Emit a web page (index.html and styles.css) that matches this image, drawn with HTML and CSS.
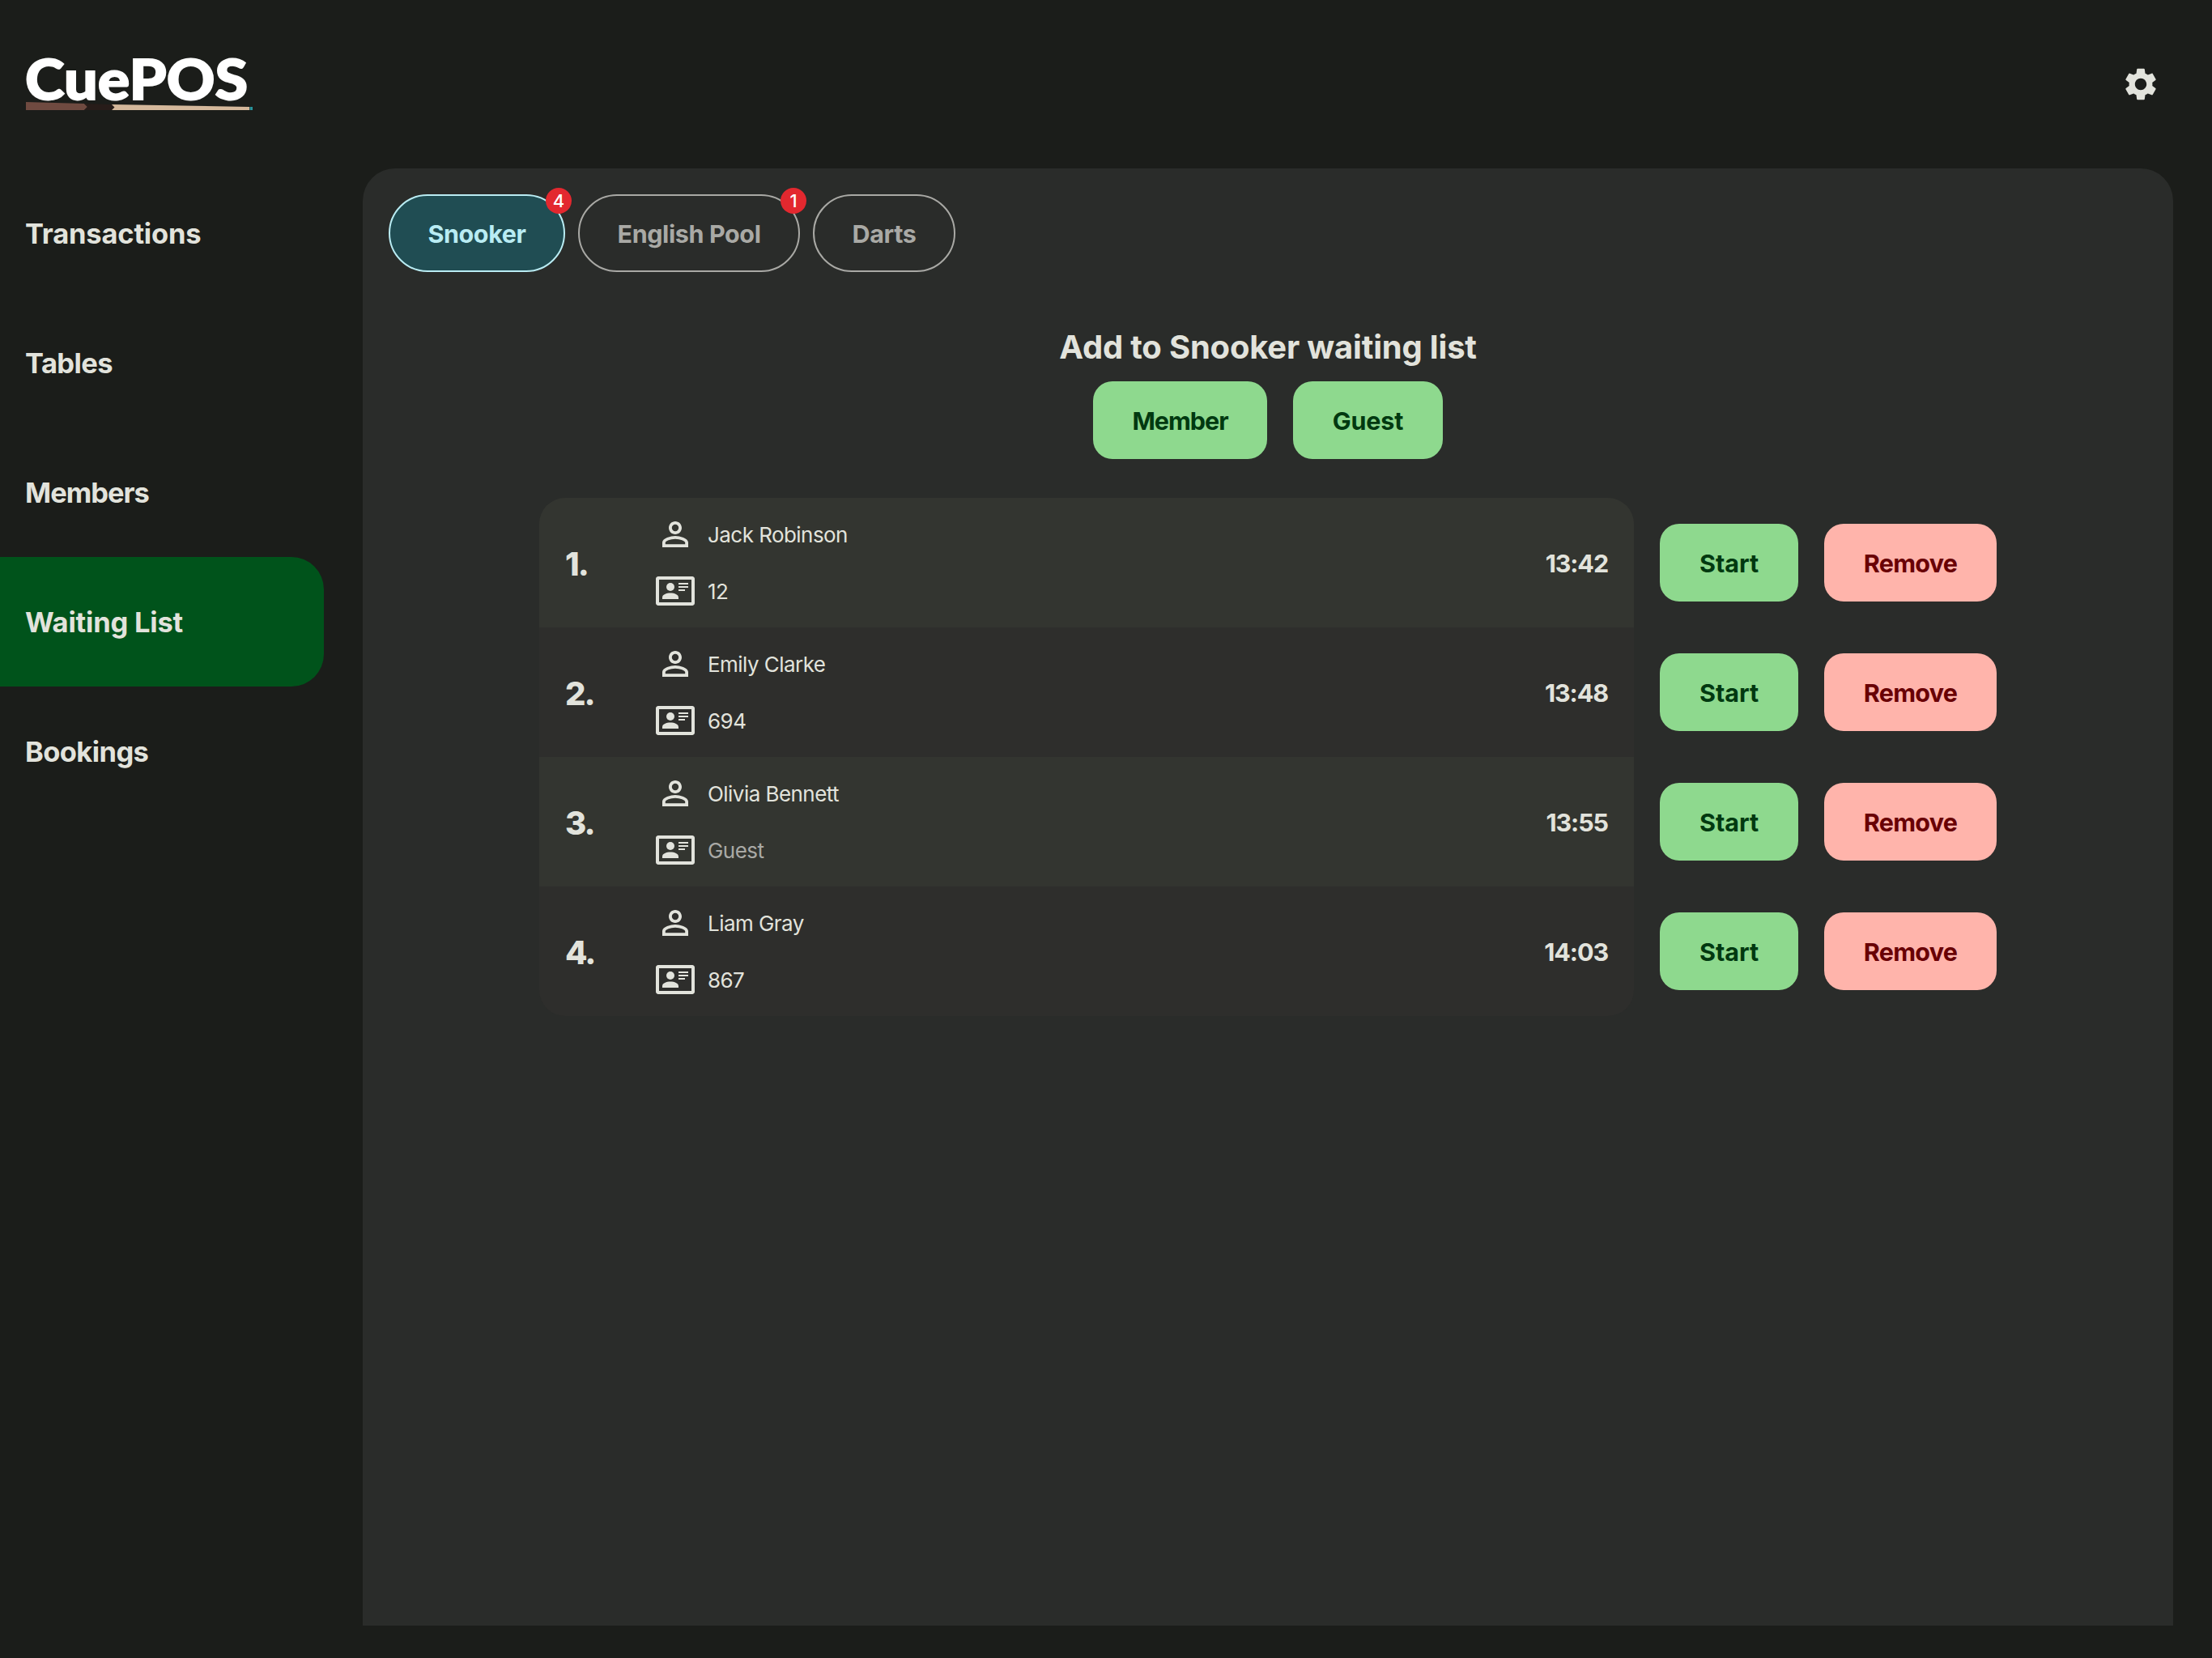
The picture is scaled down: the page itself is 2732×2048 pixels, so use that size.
FILE: index.html
```html
<!DOCTYPE html>
<html lang="en">
<head>
<meta charset="utf-8">
<title>CuePOS</title>
<link rel="stylesheet" href="styles.css">
</head>
<body>
<svg class="sprite" width="0" height="0" aria-hidden="true">
  <symbol id="person" viewBox="0 0 24 24"><path d="M12 5.9a2.1 2.1 0 1 1 0 4.2 2.1 2.1 0 0 1 0-4.2m0 9c2.97 0 6.1 1.46 6.1 2.1v1.1H5.9V17c0-.64 3.13-2.1 6.1-2.1M12 4C9.79 4 8 5.79 8 8s1.79 4 4 4 4-1.79 4-4-1.79-4-4-4zm0 9c-2.67 0-8 1.34-8 4v3h16v-3c0-2.66-5.33-4-8-4z"/></symbol>
  <symbol id="card" viewBox="0 0 24 24"><path fill-rule="evenodd" d="M1.500 3h21c.83 0 1.500.67 1.500 1.500v15c0 .83-.67 1.500-1.500 1.500h-21C.67 21 0 20.330 0 19.500v-15C0 3.670.67 3 1.500 3zM2 5v14h20V5z"/><circle cx="9" cy="9.500" r="2.500"/><path d="M4 17v-1c0-1.700 2.500-2.700 5-2.700s5 1 5 2.700v1zM14 7h6v1h-6zM14 9h6v1h-6zM14 11h4v1h-4z"/></symbol>
</svg>
<div class="app">
  <header class="topbar">
    <svg class="logo" width="284" height="80" viewBox="0 0 284 80" role="img" aria-label="CuePOS">
      <text class="logo-text" x="-1" y="58.500" textLength="275" lengthAdjust="spacingAndGlyphs">CuePOS</text>
      <path fill="#6f4a40" d="M0 62l72 2 4 4-4 4H0z"/>
      <path fill="#271c19" d="M72 64l34 1 4 3.500-4 3.500H72l4-4z"/>
      <path fill="#d4b89b" d="M106 65l170 3v4H106l3.500-3.500z"/>
      <path fill="#2a939a" d="M276.500 68h3.500v4h-3.500z"/>
    </svg>
    <svg class="gear" viewBox="0 0 24 24" aria-label="Settings"><path d="M19.140 12.940c.04-.3.060-.61.060-.94 0-.32-.02-.64-.07-.94l2.030-1.580c.18-.14.230-.41.120-.61l-1.920-3.320c-.12-.22-.37-.29-.59-.22l-2.390.96c-.5-.38-1.030-.7-1.620-.94L14.400 2.810c-.04-.24-.24-.41-.48-.41h-3.840c-.24 0-.43.17-.47.41L9.250 5.350c-.59.24-1.130.57-1.620.94l-2.390-.96c-.22-.08-.47 0-.59.22L2.740 8.870c-.12.21-.08.47.12.61l2.030 1.580c-.05.3-.09.63-.09.94s.02.64.07.94l-2.030 1.580c-.18.14-.23.41-.12.61l1.920 3.320c.12.22.37.29.59.22l2.390-.96c.5.38 1.030.7 1.620.94l.36 2.540c.05.24.24.41.48.41h3.840c.24 0 .44-.17.47-.41l.36-2.540c.59-.24 1.130-.56 1.620-.94l2.390.96c.22.08.47 0 .59-.22l1.920-3.320c.12-.22.070-.47-.12-.61zM12 15.600c-1.980 0-3.600-1.620-3.600-3.600s1.620-3.600 3.600-3.600 3.600 1.620 3.600 3.600-1.620 3.600-3.600 3.600z"/></svg>
  </header>
  <nav class="nav">
    <a class="nav-item wide">Transactions</a>
    <a class="nav-item">Tables</a>
    <a class="nav-item tight">Members</a>
    <a class="nav-item wide active">Waiting List</a>
    <a class="nav-item">Bookings</a>
  </nav>
  <main class="panel">
    <div class="tabs">
      <button class="tab tab-snooker selected">Snooker<span class="count">4</span></button>
      <button class="tab tab-pool">English Pool<span class="count">1</span></button>
      <button class="tab tab-darts">Darts</button>
    </div>
    <h1 class="title">Add to Snooker waiting list</h1>
    <div class="add">
      <button class="btn go member">Member</button>
      <button class="btn go guest">Guest</button>
    </div>
    <ol class="list">
      <li class="row">
        <div class="entry"><span class="pos">1.</span>
          <div class="who"><div class="line"><svg class="icon"><use href="#person"/></svg>Jack Robinson</div><div class="line"><svg class="icon"><use href="#card"/></svg>12</div></div>
          <time class="time">13:42</time></div>
        <button class="btn go start">Start</button><button class="btn stop">Remove</button>
      </li>
      <li class="row">
        <div class="entry"><span class="pos">2.</span>
          <div class="who"><div class="line"><svg class="icon"><use href="#person"/></svg>Emily Clarke</div><div class="line"><svg class="icon"><use href="#card"/></svg>694</div></div>
          <time class="time">13:48</time></div>
        <button class="btn go start">Start</button><button class="btn stop">Remove</button>
      </li>
      <li class="row">
        <div class="entry"><span class="pos">3.</span>
          <div class="who"><div class="line"><svg class="icon"><use href="#person"/></svg>Olivia Bennett</div><div class="line"><svg class="icon"><use href="#card"/></svg><span class="muted">Guest</span></div></div>
          <time class="time">13:55</time></div>
        <button class="btn go start">Start</button><button class="btn stop">Remove</button>
      </li>
      <li class="row">
        <div class="entry"><span class="pos">4.</span>
          <div class="who"><div class="line"><svg class="icon"><use href="#person"/></svg>Liam Gray</div><div class="line"><svg class="icon"><use href="#card"/></svg>867</div></div>
          <time class="time">14:03</time></div>
        <button class="btn go start">Start</button><button class="btn stop">Remove</button>
      </li>
    </ol>
  </main>
</div>
</body>
</html>
```
FILE: styles.css
```css
* { box-sizing: border-box; }
body { margin: 0; background: #1b1d1a; color: #e2e3dc; font-family: Inter, sans-serif; }
button { font-family: inherit; margin: 0; }
.sprite { display: block; }
.app {
  width: 2732px; height: 2048px;
  display: grid;
  grid-template: 208px 1800px / 448px 2236px;
}
.topbar {
  grid-column: 1 / -1;
  display: flex; justify-content: space-between; align-items: center;
  padding: 0 16px 0 32px;
}
.logo { display: block; overflow: visible; }
.logo-text {
  font-family: Lato, sans-serif; font-weight: 900; font-size: 68px;
  fill: #fff; stroke: #fff; stroke-width: 1.8px;
}
.gear { width: 48px; height: 48px; fill: #e2e3dc; }

.nav { display: flex; flex-direction: column; width: 400px; }
.nav-item {
  height: 160px; padding-left: 31px;
  display: flex; align-items: center;
  font-size: 34.5px; font-weight: 700; letter-spacing: -0.6px;
}
.nav-item.tight { letter-spacing: -1px; }
.nav-item.wide { letter-spacing: -0.2px; }
.nav-item.active { background: #00531b; border-radius: 0 40px 40px 0; }

.panel { background: #2a2c2a; border-radius: 40px 40px 0 0; padding: 32px; }
.tabs { display: flex; gap: 16px; }
.tab {
  position: relative; height: 96px; padding: 0;
  border: 2px solid #a9a9a5; border-radius: 48px;
  background: none; color: #a9a9a5;
  font-size: 30.5px; font-weight: 700; letter-spacing: -0.4px;
}
.tab-snooker { width: 218px; }
.tab-pool { width: 274px; }
.tab-darts { width: 176px; }
.tab.selected { background: #204d53; border-color: #b9ecf3; color: #b9ecf3; }
.count {
  position: absolute; top: -10px; right: -10px;
  width: 32px; height: 32px; border-radius: 50%;
  background: #e3282f; color: #fff;
  font-size: 22px; font-weight: 500; line-height: 32px; letter-spacing: 0; text-align: center;
}
.title { margin: 66px 0 0; font-size: 40px; line-height: 54px; font-weight: 700; letter-spacing: -0.2px; text-align: center; }
.add { display: flex; justify-content: center; gap: 32px; margin-top: 15px; }
.btn {
  flex: none; height: 96px; border: 0; border-radius: 24px; padding: 0;
  font-size: 30.5px; font-weight: 700; letter-spacing: -0.7px;
}
.go { background: #8ed98e; color: #003910; }
.stop { background: #ffb4ab; color: #690005; width: 213px; }
.member { width: 215px; letter-spacing: -1px; }
.guest { width: 185px; letter-spacing: -0.2px; }
.start { width: 171px; letter-spacing: 0; }

.list { list-style: none; width: 1800px; margin: 48px auto 0; padding: 0; }
.row { display: flex; align-items: center; gap: 32px; height: 160px; }
.entry { flex: 1; height: 160px; padding: 0 32px; display: flex; align-items: center; background: #2e2e2c; }
.row:nth-child(odd) .entry { background: #333530; }
.row:first-child .entry { border-radius: 32px 32px 0 0; }
.row:last-child .entry { border-radius: 0 0 32px 32px; }
.pos { width: 112px; padding-top: 2px; font-size: 40px; font-weight: 800; letter-spacing: -2px; }
.who { flex: 1; display: flex; flex-direction: column; gap: 22px; }
.line { display: flex; align-items: center; gap: 16px; height: 48px; font-size: 26px; letter-spacing: -0.55px; }
.icon { width: 48px; height: 48px; fill: #e2e3dc; }
.muted { color: #a9a9a5; }
.time { padding-top: 1px; font-size: 30.5px; font-weight: 700; letter-spacing: -1.1px; }
```
